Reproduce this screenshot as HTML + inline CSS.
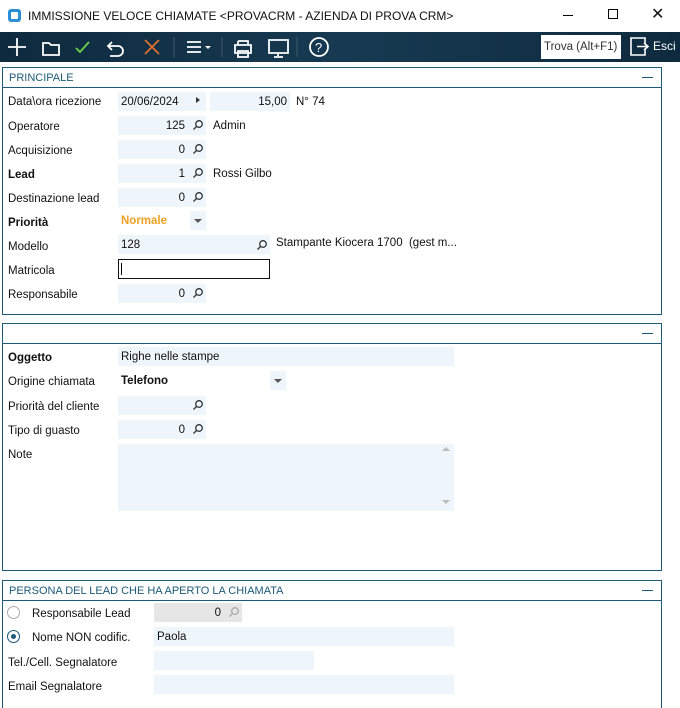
<html style="width:680px;height:708px;overflow:hidden"><head><style>
*{margin:0;padding:0;box-sizing:border-box}
body{width:680px;height:708px;background:#fff;font-family:"Liberation Sans",sans-serif;font-size:11.5px;color:#111;position:relative;overflow:hidden}
.a{position:absolute;white-space:nowrap}
.f{position:absolute;background:#eef6fc;height:19px;line-height:20px;padding:0 3px}
.r{text-align:right}
.p{position:absolute;border:1px solid #1d5a78}
.h{position:absolute;left:0;right:0;top:0;height:20px;border-bottom:1px solid #1d5a78;color:#1d5a78;font-size:11px;line-height:21px;padding-left:6px}
.h:after{content:"";position:absolute;right:8px;top:9px;width:11px;height:1px;background:#1d5a78}
.b{font-weight:bold}
.lab{position:absolute;left:8px}
</style></head><body>
<div class="a" style="left:8px;top:9px;width:13px;height:13px;background:#2a8fd6;border-radius:3px"><div style="margin:3px;width:7px;height:7px;background:#fff;border-radius:1px"></div></div>
<div class="a" style="left:28px;top:9px;font-size:12px">IMMISSIONE VELOCE CHIAMATE &lt;PROVACRM - AZIENDA DI PROVA CRM&gt;</div>
<div class="a" style="left:563px;top:15px;width:10px;height:1px;background:#000"></div>
<div class="a" style="left:608px;top:9px;width:10px;height:10px;border:1px solid #000"></div>
<div class="a" style="left:651px;top:4px;font-size:16px">✕</div>
<div class="a" style="left:0;top:32px;width:680px;height:30px;background:linear-gradient(90deg,#0e2a3e,#173a52 50%,#0e2a3e)"></div>
<svg class="a" style="left:0;top:32px" width="540" height="30" fill="none" stroke-width="1.8">
<path d="M17 6v18M8 15h18" stroke="#fff"/>
<path d="M43 11h6l2 2h8v10H43z" stroke="#fff"/>
<path d="M76 16l4 4 9-10" stroke="#6cd24a"/>
<path d="M112 10l-4 4 4 4M108 14h10a5 5 0 010 10h-8" stroke="#fff"/>
<path d="M145 8l14 14M159 8l-14 14" stroke="#e07030"/>
<path d="M174 5v20M222 5v20M297 5v20" stroke="#3c5a6e" stroke-width="1"/>
<path d="M187 10h14M187 15h14M187 20h14" stroke="#fff"/><path d="M205 14l3 3 3-3z" fill="#fff" stroke="none"/>
<path d="M238 9h10v4M238 13v-4M235 13h16v8h-16zM238 19h10v6h-10z" stroke="#fff"/>
<path d="M269 8h19v13h-19zM278 21v3M274 25h9" stroke="#fff"/>
<circle cx="319" cy="15" r="9" stroke="#fff"/><text x="315" y="20" fill="#fff" font-size="13" font-family="Liberation Sans">?</text>
</svg>
<div class="a" style="left:541px;top:35px;width:80px;height:24px;background:#fff;font-size:11.5px;line-height:24px;padding-left:3px;color:#333">Trova (Alt+F1)</div>
<svg class="a" style="left:628px;top:36px" width="22" height="22" fill="none" stroke="#fff" stroke-width="1.6"><path d="M8 2H3v17h5M8 2h9v6M8 19h9v-6M9 10.5h11M16 7l4 3.5-4 3.5"/></svg>
<div class="a" style="left:653px;top:39px;color:#fff;font-size:12px">Esci</div>

<div class="p" style="left:2px;top:67px;width:660px;height:248px"><div class="h">PRINCIPALE</div></div>
<div class="lab a" style="top:96px">Data\ora ricezione</div>
<div class="f" style="left:118px;top:92px;width:88px">20/06/2024</div>
<div class="a" style="left:196px;top:97px;border-left:4px solid #333;border-top:3.5px solid transparent;border-bottom:3.5px solid transparent"></div>
<div class="f r" style="left:210px;top:92px;width:80px">15,00</div>
<div class="a" style="left:296px;top:96px">N° 74</div>
<div class="lab a" style="top:121px">Operatore</div><div class="f r" style="left:118px;top:116px;width:70px">125</div><div class="f" style="left:188px;top:116px;width:18px"></div><div class="a" style="left:213px;top:120px">Admin</div>
<div class="lab a" style="top:145px">Acquisizione</div><div class="f r" style="left:118px;top:140px;width:70px">0</div><div class="f" style="left:188px;top:140px;width:18px"></div>
<div class="lab a b" style="top:169px">Lead</div><div class="f r" style="left:118px;top:164px;width:70px">1</div><div class="f" style="left:188px;top:164px;width:18px"></div><div class="a" style="left:213px;top:168px">Rossi Gilbo</div>
<div class="lab a" style="top:193px">Destinazione lead</div><div class="f r" style="left:118px;top:188px;width:70px">0</div><div class="f" style="left:188px;top:188px;width:18px"></div>
<div class="lab a b" style="top:217px">Priorità</div><div class="a b" style="left:121px;top:215px;color:#f0a020">Normale</div><div class="f" style="left:190px;top:211px;width:16px"></div>
<div class="a" style="left:194px;top:219px;border-top:4px solid #555;border-left:4px solid transparent;border-right:4px solid transparent"></div>
<div class="lab a" style="top:241px">Modello</div><div class="f" style="left:118px;top:235px;width:152px">128</div><div class="a" style="left:276px;top:237px">Stampante Kiocera 1700&nbsp; (gest m...</div>
<div class="lab a" style="top:265px">Matricola</div><div class="a" style="left:118px;top:259px;width:152px;height:20px;border:1px solid #111"><div style="margin:3px 0 0 2px;width:1px;height:12px;background:#000"></div></div>
<div class="lab a" style="top:289px">Responsabile</div><div class="f r" style="left:118px;top:284px;width:70px">0</div><div class="f" style="left:188px;top:284px;width:18px"></div>

<div class="p" style="left:2px;top:323px;width:660px;height:248px"><div class="h"></div></div>
<div class="lab a b" style="top:352px">Oggetto</div><div class="f" style="left:118px;top:347px;width:336px">Righe nelle stampe</div>
<div class="lab a" style="top:376px">Origine chiamata</div><div class="a b" style="left:121px;top:375px">Telefono</div><div class="f" style="left:270px;top:371px;width:16px"></div>
<div class="a" style="left:274px;top:379px;border-top:4px solid #555;border-left:4px solid transparent;border-right:4px solid transparent"></div>
<div class="lab a" style="top:401px">Priorità del cliente</div><div class="f" style="left:118px;top:396px;width:88px"></div>
<div class="lab a" style="top:425px">Tipo di guasto</div><div class="f r" style="left:118px;top:420px;width:70px">0</div><div class="f" style="left:188px;top:420px;width:18px"></div>
<div class="lab a" style="top:449px">Note</div><div class="f" style="left:118px;top:444px;width:336px;height:67px"></div>
<div class="a" style="left:442px;top:447px;border-bottom:4px solid #bbb;border-left:4px solid transparent;border-right:4px solid transparent"></div>
<div class="a" style="left:442px;top:500px;border-top:4px solid #bbb;border-left:4px solid transparent;border-right:4px solid transparent"></div>

<div class="p" style="left:2px;top:580px;width:660px;height:140px"><div class="h">PERSONA DEL LEAD CHE HA APERTO LA CHIAMATA</div></div>
<div class="a" style="left:7px;top:606px;width:13px;height:13px;border:1px solid #aaa;border-radius:50%"></div>
<div class="a" style="left:32px;top:608px">Responsabile Lead</div><div class="f r" style="left:154px;top:603px;width:70px;background:#e6e6e6">0</div><div class="f" style="left:224px;top:603px;width:18px;background:#e6e6e6"></div>
<div class="a" style="left:7px;top:630px;width:13px;height:13px;border:1px solid #1d5a78;border-radius:50%"><div style="margin:3px;width:5px;height:5px;border-radius:50%;background:#1d5a78"></div></div>
<div class="a" style="left:32px;top:632px">Nome NON codific.</div><div class="f" style="left:154px;top:627px;width:300px">Paola</div>
<div class="lab a" style="top:657px">Tel./Cell. Segnalatore</div><div class="f" style="left:154px;top:651px;width:160px"></div>
<div class="lab a" style="top:681px">Email Segnalatore</div><div class="f" style="left:154px;top:675px;width:300px"></div>
<svg class="a" style="left:0;top:0" width="680" height="708" fill="none" stroke="#333" stroke-width="1.3">
<g id="m"><circle cx="199" cy="124" r="3.3"/><path d="M196.5 126.5l-3 3"/></g>
<use href="#m" y="24"/><use href="#m" y="48"/><use href="#m" y="72"/><use href="#m" x="64" y="120"/><use href="#m" y="168"/><use href="#m" y="280"/><use href="#m" y="304"/>
<g stroke="#aaa"><circle cx="235" cy="611" r="3.3"/><path d="M232.5 613.5l-3 3"/></g>
</svg>
</body></html>
